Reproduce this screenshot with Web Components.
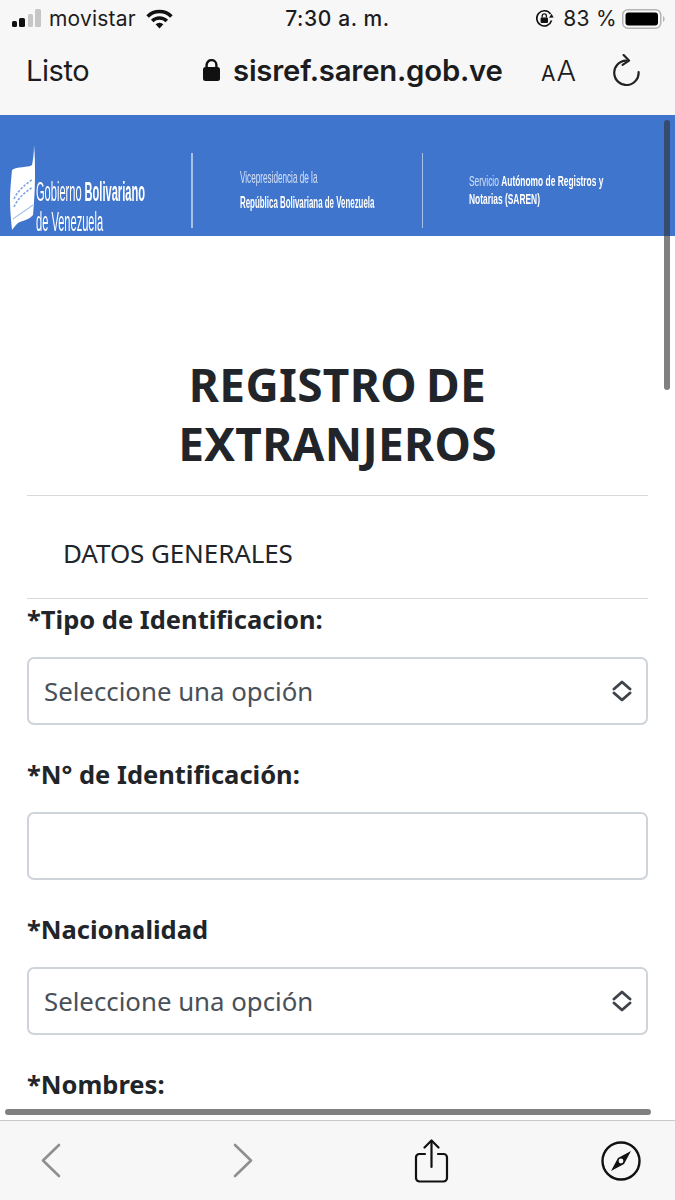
<!DOCTYPE html>
<html lang="es">
<head>
<meta charset="utf-8">
<title>Registro de Extranjeros</title>
<style>
	html,body{margin:0;height:100%;background:#fff;}
	body{width:675px;height:1200px;overflow:hidden;font-family:"Noto Sans",sans-serif;}
</style>
</head>
<body>
<phone-screen>
	<status-bar></status-bar>
	<safari-toolbar url="sisref.saren.gob.ve"></safari-toolbar>
	<gov-banner></gov-banner>
	<form-page heading="REGISTRO DE EXTRANJEROS">
		<form-field label="*Tipo de Identificacion:" type="select"></form-field>
		<form-field label="*N° de Identificación:" type="text"></form-field>
		<form-field label="*Nacionalidad" type="select"></form-field>
		<form-field label="*Nombres:" type="text"></form-field>
	</form-page>
	<safari-bottom slot="bottom"></safari-bottom>
</phone-screen>

<script>
(function(d){

	class PhoneScreen extends HTMLElement{
		constructor(){
			super();
			this.attachShadow({ mode: 'open' }).innerHTML = `
			<style>
				:host{display:flex;flex-direction:column;position:relative;width:675px;height:1200px;overflow:hidden;}
				.page{flex:1;min-height:0;overflow:hidden;display:flex;flex-direction:column;}
				::slotted(*){flex:none;}
				.vbar{position:absolute;left:664px;top:120px;width:6px;height:270px;border-radius:3px;background:rgba(50,50,55,.62);}
				.hbar{position:absolute;left:5px;top:1109px;width:646px;height:6px;border-radius:3px;background:#808080;}
			</style>
			<div class="page"><slot></slot></div>
			<slot name="bottom"></slot>
			<div class="vbar"></div>
			<div class="hbar"></div>`;
		}
	}

	class StatusBar extends HTMLElement{
		constructor(){
			super();
			this.attachShadow({ mode: 'open' }).innerHTML = `
			<style>
				:host{display:grid;grid-template-columns:1fr auto 1fr;align-items:center;height:37px;padding:0 10px 0 12px;background:#f7f7f7;color:#1c1c1e;font:400 21px Inter,"Liberation Sans",sans-serif;}
				.left,.right{display:flex;align-items:center;}
				.right{justify-content:flex-end;}
				.carrier{margin:0 10px 0 8px;letter-spacing:.2px;}
				.time{font-weight:500;letter-spacing:.6px;margin-left:-2px;}
				.pct{margin:0 5px 0 9px;letter-spacing:.3px;}
				svg{display:block;}
			</style>
			<div class="left">
				<svg width="29" height="20" viewBox="0 0 29 20"><rect x="0" y="12" width="5" height="6" rx="1.5" fill="#111"/><rect x="7" y="9" width="6" height="9" rx="1.5" fill="#111"/><rect x="16" y="5" width="5" height="13" rx="1.5" fill="#c6c6c6"/><rect x="23" y="0" width="6" height="18" rx="1.5" fill="#c6c6c6"/></svg>
				<span class="carrier">movistar</span>
				<svg width="27" height="20" viewBox="0 0 27 20" fill="none" stroke="#111" stroke-width="3.6"><path d="M1.6 7.4a16.8 16.8 0 0 1 23.8 0"/><path d="M6.2 12a10.4 10.4 0 0 1 14.6 0"/><path d="M13.5 19.4l-3.9-4.1a5.4 5.4 0 0 1 7.8 0z" fill="#111" stroke="none"/></svg>
			</div>
			<div class="time">7:30 a. m.</div>
			<div class="right">
				<svg width="19" height="19" viewBox="0 0 19 19" fill="none"><path d="M16.6 11.6A7.6 7.6 0 1 1 15.6 5" stroke="#111" stroke-width="1.6"/><path d="M18.6 8.6l-4.6.2 2.6-4z" fill="#111"/><rect x="5.6" y="8.4" width="7.4" height="5.6" rx="1" fill="#111"/><path d="M7.2 8.6V7a2.1 2.1 0 0 1 4.2 0v1.6" stroke="#111" stroke-width="1.3"/></svg>
				<span class="pct">83 %</span>
				<svg width="43" height="20" viewBox="0 0 43 20"><rect x=".75" y=".75" width="38" height="18.5" rx="5" fill="none" stroke="#b5b5b5" stroke-width="1.5"/><rect x="3.5" y="3.5" width="32.5" height="13" rx="3" fill="#000"/><path d="M41 7v6a3 3 0 0 0 1.6-3A3 3 0 0 0 41 7z" fill="#b5b5b5"/></svg>
			</div>`;
		}
	}

	class SafariToolbar extends HTMLElement{
		constructor(){
			super();
			this.attachShadow({ mode: 'open' }).innerHTML = `
			<style>
				:host{display:flex;align-items:center;height:78px;padding:0 34px 12px 26px;background:#f7f7f7;color:#1c1c1e;font:400 29px Inter,"Liberation Sans",sans-serif;box-sizing:border-box;}
				.done{width:177px;letter-spacing:-.4px;}
				.lock{margin-right:13px;display:block;}
				.url{font-weight:600;letter-spacing:-.2px;font-size:29.3px;white-space:nowrap;}
				.aa{margin-left:auto;display:flex;align-items:baseline;font-size:29px;font-weight:300;letter-spacing:0;}
				.aa small{font-size:21px;margin-right:1px;font-weight:400;}
				.reload{margin-left:37px;display:block;}
			</style>
			<span class="done">Listo</span>
			<svg class="lock" width="17" height="22" viewBox="0 0 17 22"><rect x="0" y="8" width="17" height="14" rx="2.5" fill="#111"/><path d="M3.6 9V6a4.9 4.9 0 0 1 9.8 0v3" fill="none" stroke="#111" stroke-width="2.4"/></svg>
			<span class="url" id="url"></span>
			<span class="aa"><small>A</small>A</span>
			<svg class="reload" width="28" height="32" viewBox="0 0 28 32" fill="none" stroke="#222" stroke-width="2.2" stroke-linecap="round" stroke-linejoin="round"><path d="M13 6.6A12.2 12.2 0 1 0 25.6 18"/><path d="M10.6 1l5.4 5.6-6.4 4.2"/></svg>`;
		}
		connectedCallback(){
			this.shadowRoot.getElementById('url').textContent = this.getAttribute('url');
		}
	}

	class GovBanner extends HTMLElement{
		constructor(){
			super();
			this.attachShadow({ mode: 'open' }).innerHTML = `
			<style>
				:host{display:flex;height:121px;background:#3f75cc;color:#fff;font-family:"Liberation Sans",sans-serif;overflow:hidden;}
				.logo{width:191px;display:flex;flex:none;padding:30px 0 0 10px;box-sizing:border-box;}
				.logo svg{display:block;flex:none;filter:blur(.6px);}
				.gov{margin:32px 0 0 0;line-height:30px;font-size:27px;filter:blur(.5px);}
				.gov .ln{transform:scaleX(.41);}
				.rule{flex:none;width:1.5px;height:75px;margin-top:38px;background:rgba(255,255,255,.55);}
				.sec{flex:none;box-sizing:border-box;filter:blur(.6px);color:#d3e0f8;}
				.one{width:229px;padding:50px 0 0 47px;font-size:17px;line-height:25px;}
				.two{padding:57px 0 0 46px;font-size:15px;line-height:18px;}
				.ln{display:block;white-space:nowrap;transform-origin:0 50%;}
				b{font-weight:700;color:#fff;}
			</style>
			<div class="logo">
				<svg width="26" height="88" viewBox="0 0 26 88"><path d="M24 0c0 8-1 15-2 20-4 3-15 1-20 5C1 36 0 46 0 55c0 10 1 20 2 30 3-4 5-7 8-8 5-2 10-3 13-7 1-12 2-26 2-38 0-11 0-22-1-32z" fill="#fff"/><path d="M4 62c4-9 10-14 19-20M4 54c4-9 11-14 19-20" fill="none" stroke="#7fa3df" stroke-width="1.600" stroke-dasharray="2.500 1.500"/><path d="M3 74c5-4 12-8 20-14" fill="none" stroke="#a9c2ea" stroke-width="1.200"/></svg>
				<div class="gov">
					<span class="ln">Gobierno <b>Bolivariano</b></span>
					<span class="ln">de Venezuela</span>
				</div>
			</div>
			<div class="rule"></div>
			<div class="sec one">
				<span class="ln" style="transform:scaleX(.48)">Vicepresidencia de la</span>
				<span class="ln" style="transform:scaleX(.465)"><b>República Bolivariana de Venezuela</b></span>
			</div>
			<div class="rule"></div>
			<div class="sec two">
				<span class="ln" style="transform:scaleX(.56)">Servicio <b>Autónomo de Registros y</b></span>
				<span class="ln" style="transform:scaleX(.56)"><b>Notarias (SAREN)</b></span>
			</div>`;
		}
	}

	class FormPage extends HTMLElement{
		constructor(){
			super();
			this.attachShadow({ mode: 'open' }).innerHTML = `
			<style>
				:host{display:block;padding:119px 27px 0 27px;background:#fff;color:#212529;font-family:"Noto Sans",sans-serif;}
				h1{margin:0 auto 22px;width:400px;text-align:center;font-size:46px;line-height:59px;font-weight:700;letter-spacing:.3px;word-spacing:-3px;}
				.section{border-top:1.5px solid #d9d9d9;border-bottom:1.5px solid #d9d9d9;height:104px;box-sizing:border-box;display:flex;align-items:center;padding:11px 0 0 36px;font-size:26px;letter-spacing:-.1px;margin-bottom:2px;}
				.fields{display:flex;flex-direction:column;gap:31px;}
			</style>
			<h1 id="heading"></h1>
			<div class="section">DATOS GENERALES</div>
			<div class="fields"><slot></slot></div>`;
		}
		connectedCallback(){
			this.shadowRoot.getElementById('heading').textContent = this.getAttribute('heading');
		}
	}

	class FormField extends HTMLElement{
		constructor(){
			super();
			this.attachShadow({ mode: 'open' }).innerHTML = `
			<style>
				:host{display:block;}
				label{display:block;height:38px;line-height:36px;margin-bottom:18px;font-size:25.500px;font-weight:700;color:#212529;}
				.box{height:68px;box-sizing:border-box;border:2px solid #ced4da;border-radius:7px;display:flex;align-items:center;justify-content:space-between;padding:0 14px 0 15px;background:#fff;font-size:25.800px;color:#495057;}
				svg{display:block;}
			</style>
			<label id="lbl"></label>
			<div class="box" id="box"></div>`;
		}
		connectedCallback(){
			this.shadowRoot.getElementById('lbl').textContent = this.getAttribute('label');
			if(this.getAttribute('type') === 'select'){
				this.shadowRoot.getElementById('box').innerHTML = `<span>Seleccione una opción</span>
				<svg width="20" height="24" viewBox="0 0 20 24" fill="none" stroke="#3f444a" stroke-width="2.900" stroke-linecap="round" stroke-linejoin="round"><path d="M2 10l8-7 8 7"/><path d="M2 14l8 7 8-7"/></svg>`;
			}
		}
	}

	class SafariBottom extends HTMLElement{
		constructor(){
			super();
			this.attachShadow({ mode: 'open' }).innerHTML = `
			<style>
				:host{display:flex;flex:none;align-items:center;height:80px;box-sizing:border-box;border-top:1.5px solid #c8c8c8;background:#f7f7f7;padding:0 34px 0 41px;position:relative;z-index:1;}
				svg{display:block;flex:none;}
			</style>
			<svg width="20" height="35" viewBox="0 0 20 35" fill="none" stroke="#8f8f8f" stroke-width="2.6" stroke-linecap="round" stroke-linejoin="round" style="margin:0 172px 0 0"><path d="M18 2L2 17.5 18 33"/></svg>
			<svg width="20" height="35" viewBox="0 0 20 35" fill="none" stroke="#8f8f8f" stroke-width="2.6" stroke-linecap="round" stroke-linejoin="round" style="margin:0 161px 0 0"><path d="M2 2l16 15.5L2 33"/></svg>
			<svg width="35" height="44" viewBox="0 0 35 44" fill="none" stroke="#111" stroke-width="2.2" stroke-linecap="round" stroke-linejoin="round" style="margin:0 152px 0 0"><path d="M11 15H5a3.5 3.5 0 0 0-3 3.5V39a3.5 3.5 0 0 0 3.5 3.5h24A3.5 3.5 0 0 0 33 39V18.500a3.500 3.500 0 0 0-3.500-3.500H24"/><path d="M17.500 28V2"/><path d="M10.500 8.500l7-7 7 7"/></svg>
			<svg width="40" height="40" viewBox="0 0 40 40"><circle cx="20" cy="20" r="18.500" fill="none" stroke="#111" stroke-width="2.400"/><path d="M30 10l-13 7-7 13 13-7z" fill="#111"/><circle cx="20" cy="20" r="2.400" fill="#f7f7f7"/></svg>`;
		}
	}

	window.customElements.define('phone-screen', PhoneScreen);
	window.customElements.define('status-bar', StatusBar);
	window.customElements.define('safari-toolbar', SafariToolbar);
	window.customElements.define('gov-banner', GovBanner);
	window.customElements.define('form-page', FormPage);
	window.customElements.define('form-field', FormField);
	window.customElements.define('safari-bottom', SafariBottom);

})(document);
</script>
</body>
</html>
